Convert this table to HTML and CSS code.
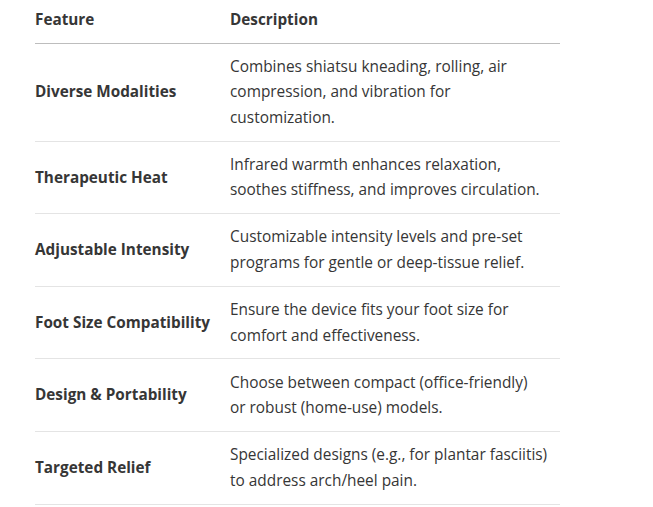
FILE: index.html
```html
<!DOCTYPE html>
<html lang="en">
<head>
<meta charset="utf-8">
<link rel="stylesheet" href="styles.css">
</head>
<body>
<table class="features">
  <thead>
    <tr><th class="col-feature">Feature</th><th class="col-desc">Description</th></tr>
  </thead>
  <tbody>
    <tr><td class="name">Diverse Modalities</td><td class="desc"><span class="line">Combines shiatsu kneading, rolling, air</span> <span class="line">compression, and vibration for</span> <span class="line">customization.</span></td></tr>
    <tr><td class="name">Therapeutic Heat</td><td class="desc"><span class="line">Infrared warmth enhances relaxation,</span> <span class="line">soothes stiffness, and improves circulation.</span></td></tr>
    <tr><td class="name">Adjustable Intensity</td><td class="desc"><span class="line">Customizable intensity levels and pre-set</span> <span class="line">programs for gentle or deep-tissue relief.</span></td></tr>
    <tr><td class="name">Foot Size Compatibility</td><td class="desc"><span class="line">Ensure the device fits your foot size for</span> <span class="line">comfort and effectiveness.</span></td></tr>
    <tr><td class="name">Design &amp; Portability</td><td class="desc"><span class="line">Choose between compact (office-friendly)</span> <span class="line">or robust (home-use) models.</span></td></tr>
    <tr><td class="name">Targeted Relief</td><td class="desc"><span class="line">Specialized designs (e.g., for plantar fasciitis)</span> <span class="line">to address arch/heel pain.</span></td></tr>
  </tbody>
</table>
</body>
</html>
```
FILE: styles.css
```css
html, body {
  margin: 0;
  padding: 0;
  background: #ffffff;
}
body {
  font-family: "Open Sans", "Noto Sans", sans-serif;
  font-size: 15.4px;
  line-height: 25.5px;
  color: #363636;
}
.features {
  border-collapse: collapse;
  margin-left: 35px;
  width: 525px;
  table-layout: fixed;
}
.features th {
  text-align: left;
  font-weight: 700;
  font-size: 15.3px;
  padding: 6.5px 0 10.5px;
  border-bottom: 1px solid #bdbdbd;
}
.col-feature {
  width: 195px;
}
.features td {
  padding: 10.3px 0 10.3px;
  border-bottom: 1px solid #e4e4e4;
  vertical-align: middle;
}
.features td.name {
  font-weight: 700;
  font-size: 15.3px;
}
.desc {
  white-space: nowrap;
}
.line {
  display: block;
}
```
